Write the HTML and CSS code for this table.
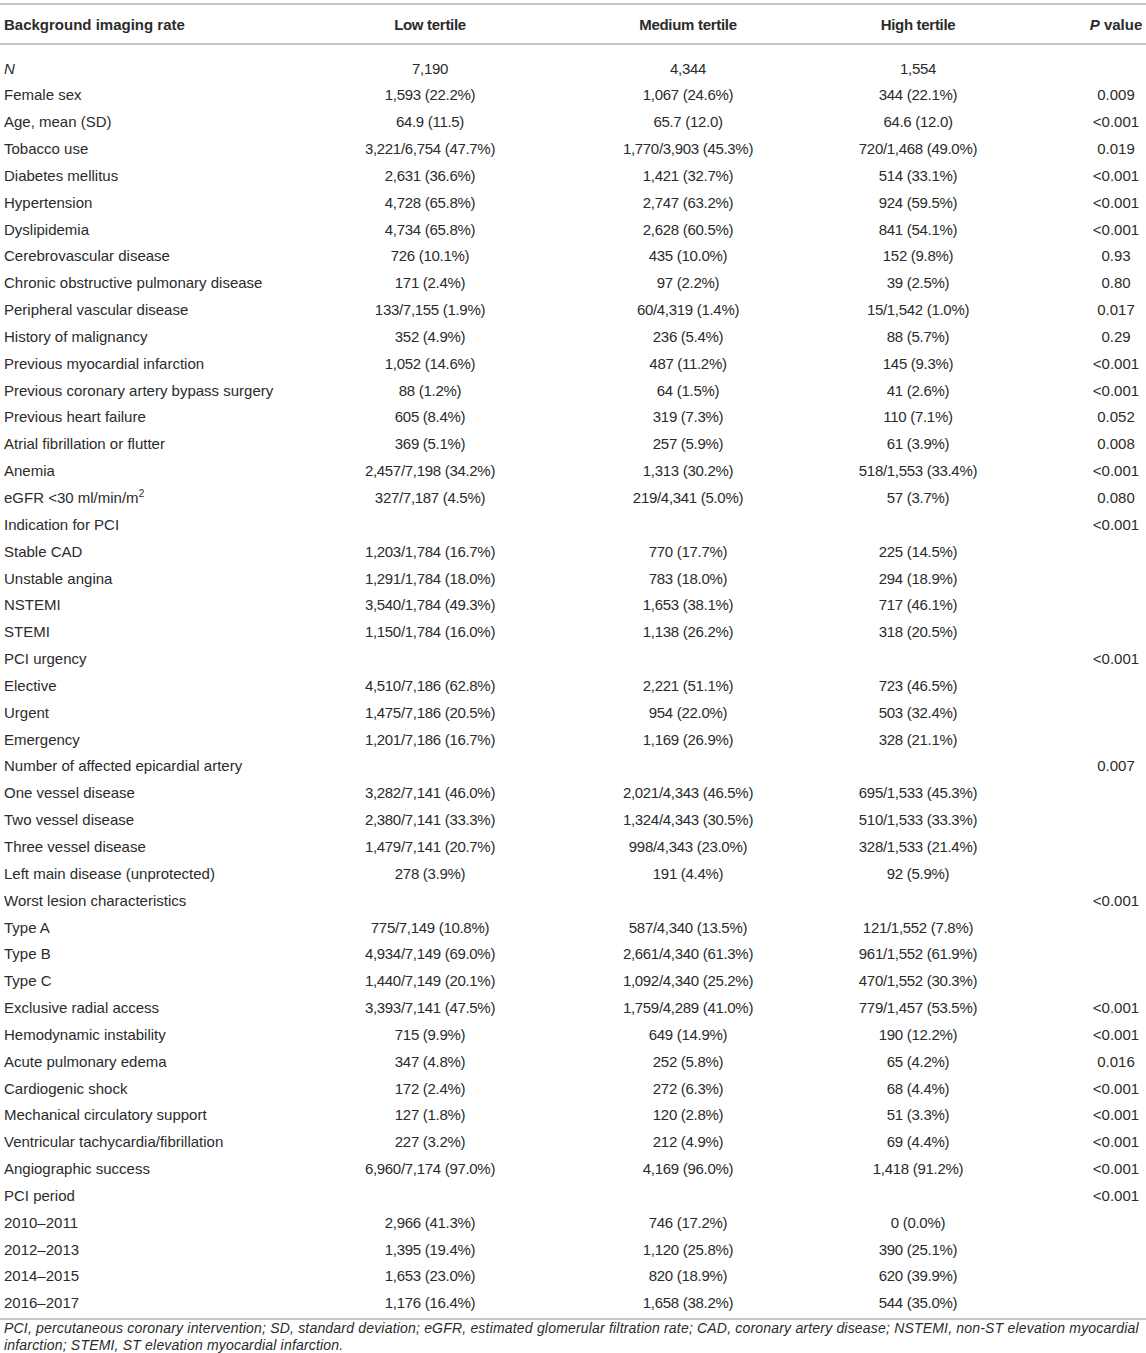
FILE: index.html
```html
<!DOCTYPE html>
<html lang="en">
<head>
<meta charset="utf-8">
<title>Background imaging rate</title>
<link rel="stylesheet" href="styles.css">
</head>
<body>
<div class="table">
  <div class="row head">
    <div class="lab">Background imaging rate</div>
    <div class="c">Low tertile</div>
    <div class="c">Medium tertile</div>
    <div class="c">High tertile</div>
    <div class="p"><i>P</i> value</div>
  </div>
  <div class="body">
    <div class="row"><div class="lab"><i>N</i></div><div class="c">7,190</div><div class="c">4,344</div><div class="c">1,554</div><div class="p"></div></div>
    <div class="row"><div class="lab">Female sex</div><div class="c">1,593 (22.2%)</div><div class="c">1,067 (24.6%)</div><div class="c">344 (22.1%)</div><div class="p">0.009</div></div>
    <div class="row"><div class="lab">Age, mean (SD)</div><div class="c">64.9 (11.5)</div><div class="c">65.7 (12.0)</div><div class="c">64.6 (12.0)</div><div class="p">&lt;0.001</div></div>
    <div class="row"><div class="lab">Tobacco use</div><div class="c">3,221/6,754 (47.7%)</div><div class="c">1,770/3,903 (45.3%)</div><div class="c">720/1,468 (49.0%)</div><div class="p">0.019</div></div>
    <div class="row"><div class="lab">Diabetes mellitus</div><div class="c">2,631 (36.6%)</div><div class="c">1,421 (32.7%)</div><div class="c">514 (33.1%)</div><div class="p">&lt;0.001</div></div>
    <div class="row"><div class="lab">Hypertension</div><div class="c">4,728 (65.8%)</div><div class="c">2,747 (63.2%)</div><div class="c">924 (59.5%)</div><div class="p">&lt;0.001</div></div>
    <div class="row"><div class="lab">Dyslipidemia</div><div class="c">4,734 (65.8%)</div><div class="c">2,628 (60.5%)</div><div class="c">841 (54.1%)</div><div class="p">&lt;0.001</div></div>
    <div class="row"><div class="lab">Cerebrovascular disease</div><div class="c">726 (10.1%)</div><div class="c">435 (10.0%)</div><div class="c">152 (9.8%)</div><div class="p">0.93</div></div>
    <div class="row"><div class="lab">Chronic obstructive pulmonary disease</div><div class="c">171 (2.4%)</div><div class="c">97 (2.2%)</div><div class="c">39 (2.5%)</div><div class="p">0.80</div></div>
    <div class="row"><div class="lab">Peripheral vascular disease</div><div class="c">133/7,155 (1.9%)</div><div class="c">60/4,319 (1.4%)</div><div class="c">15/1,542 (1.0%)</div><div class="p">0.017</div></div>
    <div class="row"><div class="lab">History of malignancy</div><div class="c">352 (4.9%)</div><div class="c">236 (5.4%)</div><div class="c">88 (5.7%)</div><div class="p">0.29</div></div>
    <div class="row"><div class="lab">Previous myocardial infarction</div><div class="c">1,052 (14.6%)</div><div class="c">487 (11.2%)</div><div class="c">145 (9.3%)</div><div class="p">&lt;0.001</div></div>
    <div class="row"><div class="lab">Previous coronary artery bypass surgery</div><div class="c">88 (1.2%)</div><div class="c">64 (1.5%)</div><div class="c">41 (2.6%)</div><div class="p">&lt;0.001</div></div>
    <div class="row"><div class="lab">Previous heart failure</div><div class="c">605 (8.4%)</div><div class="c">319 (7.3%)</div><div class="c">110 (7.1%)</div><div class="p">0.052</div></div>
    <div class="row"><div class="lab">Atrial fibrillation or flutter</div><div class="c">369 (5.1%)</div><div class="c">257 (5.9%)</div><div class="c">61 (3.9%)</div><div class="p">0.008</div></div>
    <div class="row"><div class="lab">Anemia</div><div class="c">2,457/7,198 (34.2%)</div><div class="c">1,313 (30.2%)</div><div class="c">518/1,553 (33.4%)</div><div class="p">&lt;0.001</div></div>
    <div class="row"><div class="lab">eGFR &lt;30 ml/min/m<sup>2</sup></div><div class="c">327/7,187 (4.5%)</div><div class="c">219/4,341 (5.0%)</div><div class="c">57 (3.7%)</div><div class="p">0.080</div></div>
    <div class="row"><div class="lab">Indication for PCI</div><div class="c"></div><div class="c"></div><div class="c"></div><div class="p">&lt;0.001</div></div>
    <div class="row"><div class="lab">Stable CAD</div><div class="c">1,203/1,784 (16.7%)</div><div class="c">770 (17.7%)</div><div class="c">225 (14.5%)</div><div class="p"></div></div>
    <div class="row"><div class="lab">Unstable angina</div><div class="c">1,291/1,784 (18.0%)</div><div class="c">783 (18.0%)</div><div class="c">294 (18.9%)</div><div class="p"></div></div>
    <div class="row"><div class="lab">NSTEMI</div><div class="c">3,540/1,784 (49.3%)</div><div class="c">1,653 (38.1%)</div><div class="c">717 (46.1%)</div><div class="p"></div></div>
    <div class="row"><div class="lab">STEMI</div><div class="c">1,150/1,784 (16.0%)</div><div class="c">1,138 (26.2%)</div><div class="c">318 (20.5%)</div><div class="p"></div></div>
    <div class="row"><div class="lab">PCI urgency</div><div class="c"></div><div class="c"></div><div class="c"></div><div class="p">&lt;0.001</div></div>
    <div class="row"><div class="lab">Elective</div><div class="c">4,510/7,186 (62.8%)</div><div class="c">2,221 (51.1%)</div><div class="c">723 (46.5%)</div><div class="p"></div></div>
    <div class="row"><div class="lab">Urgent</div><div class="c">1,475/7,186 (20.5%)</div><div class="c">954 (22.0%)</div><div class="c">503 (32.4%)</div><div class="p"></div></div>
    <div class="row"><div class="lab">Emergency</div><div class="c">1,201/7,186 (16.7%)</div><div class="c">1,169 (26.9%)</div><div class="c">328 (21.1%)</div><div class="p"></div></div>
    <div class="row"><div class="lab">Number of affected epicardial artery</div><div class="c"></div><div class="c"></div><div class="c"></div><div class="p">0.007</div></div>
    <div class="row"><div class="lab">One vessel disease</div><div class="c">3,282/7,141 (46.0%)</div><div class="c">2,021/4,343 (46.5%)</div><div class="c">695/1,533 (45.3%)</div><div class="p"></div></div>
    <div class="row"><div class="lab">Two vessel disease</div><div class="c">2,380/7,141 (33.3%)</div><div class="c">1,324/4,343 (30.5%)</div><div class="c">510/1,533 (33.3%)</div><div class="p"></div></div>
    <div class="row"><div class="lab">Three vessel disease</div><div class="c">1,479/7,141 (20.7%)</div><div class="c">998/4,343 (23.0%)</div><div class="c">328/1,533 (21.4%)</div><div class="p"></div></div>
    <div class="row"><div class="lab">Left main disease (unprotected)</div><div class="c">278 (3.9%)</div><div class="c">191 (4.4%)</div><div class="c">92 (5.9%)</div><div class="p"></div></div>
    <div class="row"><div class="lab">Worst lesion characteristics</div><div class="c"></div><div class="c"></div><div class="c"></div><div class="p">&lt;0.001</div></div>
    <div class="row"><div class="lab">Type A</div><div class="c">775/7,149 (10.8%)</div><div class="c">587/4,340 (13.5%)</div><div class="c">121/1,552 (7.8%)</div><div class="p"></div></div>
    <div class="row"><div class="lab">Type B</div><div class="c">4,934/7,149 (69.0%)</div><div class="c">2,661/4,340 (61.3%)</div><div class="c">961/1,552 (61.9%)</div><div class="p"></div></div>
    <div class="row"><div class="lab">Type C</div><div class="c">1,440/7,149 (20.1%)</div><div class="c">1,092/4,340 (25.2%)</div><div class="c">470/1,552 (30.3%)</div><div class="p"></div></div>
    <div class="row"><div class="lab">Exclusive radial access</div><div class="c">3,393/7,141 (47.5%)</div><div class="c">1,759/4,289 (41.0%)</div><div class="c">779/1,457 (53.5%)</div><div class="p">&lt;0.001</div></div>
    <div class="row"><div class="lab">Hemodynamic instability</div><div class="c">715 (9.9%)</div><div class="c">649 (14.9%)</div><div class="c">190 (12.2%)</div><div class="p">&lt;0.001</div></div>
    <div class="row"><div class="lab">Acute pulmonary edema</div><div class="c">347 (4.8%)</div><div class="c">252 (5.8%)</div><div class="c">65 (4.2%)</div><div class="p">0.016</div></div>
    <div class="row"><div class="lab">Cardiogenic shock</div><div class="c">172 (2.4%)</div><div class="c">272 (6.3%)</div><div class="c">68 (4.4%)</div><div class="p">&lt;0.001</div></div>
    <div class="row"><div class="lab">Mechanical circulatory support</div><div class="c">127 (1.8%)</div><div class="c">120 (2.8%)</div><div class="c">51 (3.3%)</div><div class="p">&lt;0.001</div></div>
    <div class="row"><div class="lab">Ventricular tachycardia/fibrillation</div><div class="c">227 (3.2%)</div><div class="c">212 (4.9%)</div><div class="c">69 (4.4%)</div><div class="p">&lt;0.001</div></div>
    <div class="row"><div class="lab">Angiographic success</div><div class="c">6,960/7,174 (97.0%)</div><div class="c">4,169 (96.0%)</div><div class="c">1,418 (91.2%)</div><div class="p">&lt;0.001</div></div>
    <div class="row"><div class="lab">PCI period</div><div class="c"></div><div class="c"></div><div class="c"></div><div class="p">&lt;0.001</div></div>
    <div class="row"><div class="lab">2010–2011</div><div class="c">2,966 (41.3%)</div><div class="c">746 (17.2%)</div><div class="c">0 (0.0%)</div><div class="p"></div></div>
    <div class="row"><div class="lab">2012–2013</div><div class="c">1,395 (19.4%)</div><div class="c">1,120 (25.8%)</div><div class="c">390 (25.1%)</div><div class="p"></div></div>
    <div class="row"><div class="lab">2014–2015</div><div class="c">1,653 (23.0%)</div><div class="c">820 (18.9%)</div><div class="c">620 (39.9%)</div><div class="p"></div></div>
    <div class="row"><div class="lab">2016–2017</div><div class="c">1,176 (16.4%)</div><div class="c">1,658 (38.2%)</div><div class="c">544 (35.0%)</div><div class="p"></div></div>
  </div>
</div>
<p class="foot">PCI, percutaneous coronary intervention; SD, standard deviation; eGFR, estimated glomerular filtration rate; CAD, coronary artery disease; NSTEMI, non-ST elevation myocardial infarction; STEMI, ST elevation myocardial infarction.</p>
</body>
</html>
```
FILE: styles.css
```css
html, body {
  margin: 0;
  padding: 0;
  background: #ffffff;
}
body {
  width: 1146px;
  font-family: "Liberation Sans", Arial, Helvetica, sans-serif;
  font-size: 15px;
  color: #2b2b2b;
}
.table {
  margin-top: 3px;
  border-top: 2px solid #c8c8c8;
  border-bottom: 2px solid #c8c8c8;
}
.row {
  display: grid;
  grid-template-columns: 301px 258px 258px 202px 127px;
  height: 26.85px;
  align-items: center;
  white-space: nowrap;
}
.head {
  height: 38px;
  font-weight: bold;
  border-bottom: 2px solid #c8c8c8;
}
.body {
  padding-top: 9.6px;
  padding-bottom: 2px;
}
.lab {
  padding-left: 4px;
}
.c {
  text-align: center;
  letter-spacing: -0.3px;
}
.p {
  text-align: center;
  padding-left: 67px;
}
sup {
  font-size: 10px;
  line-height: 0;
  vertical-align: 6px;
}
.foot {
  margin: 0;
  padding: 0 4px;
  font-size: 14px;
  line-height: 17px;
  letter-spacing: 0.19px;
  font-style: italic;
  color: #2b2b2b;
}
```
